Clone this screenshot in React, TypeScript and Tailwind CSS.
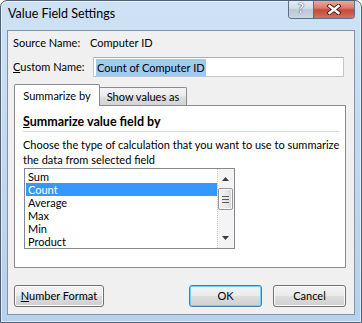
import React from "react";

const btn =
  "h-[22px] rounded-[3px] border flex items-center justify-center bg-[linear-gradient(to_bottom,#f2f2f2_0%,#ebebeb_48%,#dddddd_52%,#cfcfcf_100%)]";

export default function App() {
  return (
    <div className="w-[362px] h-[323px] relative rounded-t-[7px] border border-[#4d6078] bg-[linear-gradient(to_bottom,#cfe2f5_0%,#c2daf1_40%,#b6d1ec_100%)] shadow-[inset_0_0_0_1px_rgba(255,255,255,0.55)] font-['Lato',sans-serif] text-[11px] text-black flex flex-col px-[6px] pb-[7px] overflow-hidden">
      {/* title bar */}
      <div className="h-[29px] flex items-center pb-[3px] pl-[1px] text-[12.5px] text-black">
        Value Field Settings
      </div>
      <div className="absolute top-[-1px] left-[287px] w-[67px] h-[19px] flex rounded-b-[4px] border border-t-0 border-[#5d6f87] overflow-hidden">
        <div className="w-[25px] h-full border-r border-[#5d6f87] bg-[linear-gradient(to_bottom,#e6edf5_0%,#d3dde9_45%,#b9c7d8_55%,#c9d6e5_100%)] flex items-center justify-center text-[13px] font-bold text-white [text-shadow:0_0_1px_#2d3a4a,0_0_1px_#2d3a4a]">
          ?
        </div>
        <div className="flex-1 h-full bg-[linear-gradient(to_bottom,#eab0a3_0%,#d97a6a_45%,#c74a38_55%,#d5705e_100%)] flex items-center justify-center">
          <svg width="16" height="11" viewBox="0 0 16 11">
            <path d="M3.5 2 L12.5 9 M12.5 2 L3.5 9" stroke="#4a1810" strokeWidth="4.2" strokeLinecap="square" />
            <path d="M3.5 2 L12.5 9 M12.5 2 L3.5 9" stroke="#ffffff" strokeWidth="2.4" strokeLinecap="square" />
          </svg>
        </div>
      </div>

      {/* client area */}
      <div className="flex-1 border border-[#7f93aa] bg-[#f0f0f0] flex flex-col">
        <div className="mt-[4px] h-[15px] leading-[15px] flex pl-[5px]">
          <div className="w-[77px]">Source Name:</div>
          <div>Computer ID</div>
        </div>
        <div className="mt-[7px] h-[20px] flex items-center pl-[5px]">
          <div className="w-[80px]">
            <span className="underline">C</span>ustom Name:
          </div>
          <div className="w-[251px] h-[20px] border border-[#c3c7cd] border-t-[#abadb3] bg-white flex items-center pl-[2px]">
            <span className="bg-[#9fcaf1] h-[17px] leading-[17px] px-[1px]">Count of Computer ID</span>
          </div>
        </div>

        {/* tabs */}
        <div className="mt-[7px] ml-[6px] mr-[8px] flex flex-col">
          <div className="h-[21px] flex items-end relative z-10">
            <div className="w-[86px] h-[22px] -mb-px border border-b-0 border-[#898c95] bg-white rounded-t-[2px] flex items-center justify-center pt-[2px]">
              Summarize by
            </div>
            <div className="w-[87px] h-[18px] border border-l-0 border-b-0 border-[#898c95] rounded-tr-[2px] bg-[linear-gradient(to_bottom,#f3f3f3_0%,#ebebeb_48%,#dddddd_52%,#d4d4d4_100%)] flex items-center justify-center pt-[1px]">
              Show values as
            </div>
          </div>
          <div className="h-[163px] border border-[#898c95] bg-white pl-[8px] pr-[6px] flex flex-col">
            <div className="mt-[8px] leading-[16px] font-bold text-[12.5px]">
              <span className="underline">S</span>ummarize value field by
            </div>
            <div className="mt-[1px] h-px bg-[#d5dbe3]" />
            <div className="mt-[5px] leading-[15px] whitespace-nowrap">
              <div>Choose the type of calculation that you want to use to summarize</div>
              <div>the data from selected field</div>
            </div>
            <div className="mt-[1px] ml-[1px] w-[211px] h-[81px] border border-[#828790] bg-white flex">
              <div className="flex-1 pt-[1px] pl-[1px] flex flex-col">
                {["Sum", "Count", "Average", "Max", "Min", "Product"].map((t) => (
                  <div
                    key={t}
                    className={
                      "h-[13px] leading-[13px] pl-[2px] " +
                      (t === "Count" ? "bg-[#3399ff] text-white" : "")
                    }
                  >
                    {t}
                  </div>
                ))}
              </div>
              <div className="w-[17px] h-full relative border-l border-dotted border-[#c8c8c8] bg-[#f4f4f4]">
                <svg className="absolute left-[4px] top-[8px]" width="7" height="4" viewBox="0 0 7 4">
                  <path d="M3.5 0 L7 4 L0 4 Z" fill="#3c3c3c" />
                </svg>
                <div className="absolute left-[0px] right-[1px] top-[19px] h-[22px] rounded-[2px] border border-[#979797] bg-[linear-gradient(to_right,#f4f4f4_0%,#e8e8e8_50%,#d9d9d9_100%)] shadow-[inset_0_0_0_1px_#fbfbfb] flex flex-col items-center justify-center gap-[2px]">
                  <div className="w-[7px] h-px bg-[#5c5c5c]" />
                  <div className="w-[7px] h-px bg-[#5c5c5c]" />
                  <div className="w-[7px] h-px bg-[#5c5c5c]" />
                </div>
                <svg className="absolute left-[4px] bottom-[8px]" width="7" height="4" viewBox="0 0 7 4">
                  <path d="M0 0 L7 0 L3.5 4 Z" fill="#3c3c3c" />
                </svg>
              </div>
            </div>
          </div>
        </div>

        {/* buttons */}
        <div className="mt-[17px] flex">
          <div className={btn + " ml-[6px] w-[90px] border-[#707070] shadow-[inset_0_0_0_1px_#fcfcfc]"}>
            <span>
              <span className="underline">N</span>umber Format
            </span>
          </div>
          <div className="flex-1" />
          <div className={btn + " w-[73px] border-[#3c7fb1] shadow-[inset_0_0_0_1px_#6fd3f7]"}>OK</div>
          <div className={btn + " ml-[11px] mr-[8px] w-[73px] border-[#707070] shadow-[inset_0_0_0_1px_#fcfcfc]"}>
            Cancel
          </div>
        </div>
      </div>
    </div>
  );
}
